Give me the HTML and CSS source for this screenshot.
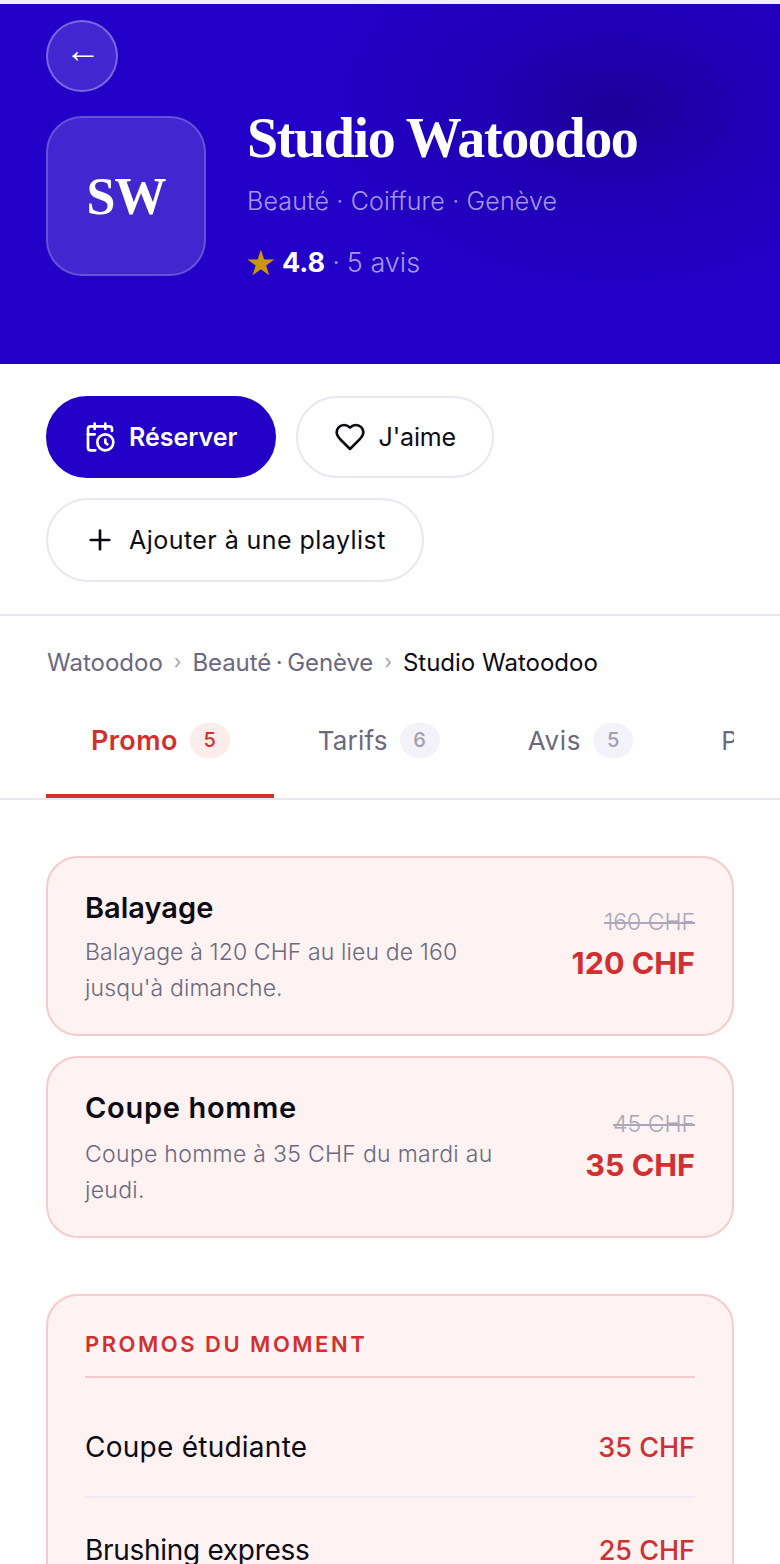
FILE: index.html
```html
<!DOCTYPE html>
<html lang="fr">
<head>
<meta charset="utf-8">
<title>Studio Watoodoo</title>
<link rel="stylesheet" href="styles.css">
</head>
<body>
<div class="page">
  <header class="hero">
    <button class="back" aria-label="Retour">←</button>
    <div class="identity">
      <div class="logo">SW</div>
      <div class="info">
        <h1 class="title">Studio Watoodoo</h1>
        <p class="meta">Beauté · Coiffure · Genève</p>
        <p class="rating"><span class="star">★</span><strong class="score">4.8</strong><span class="dot">·</span><span>5 avis</span></p>
      </div>
    </div>
  </header>

  <section class="actions">
    <a class="btn primary">
      <svg class="ico" viewBox="0 0 24 24"><path d="M21 7.5V6a2 2 0 0 0-2-2H5a2 2 0 0 0-2 2v14a2 2 0 0 0 2 2h3.5"/><path d="M16 2v4"/><path d="M8 2v4"/><path d="M3 10h5"/><path d="M17.5 17.5 16 16.3V14"/><circle cx="16" cy="16" r="6"/></svg>
      Réserver
    </a>
    <a class="btn like">
      <svg class="ico" viewBox="0 0 24 24"><path d="M19 14c1.49-1.46 3-3.21 3-5.5A5.5 5.5 0 0 0 16.5 3c-1.76 0-3 .5-4.500 2-1.500-1.500-2.740-2-4.500-2A5.500 5.500 0 0 0 2 8.500c0 2.300 1.500 4.050 3 5.500l7 7Z"/></svg>
      J'aime
    </a>
    <a class="btn tall">
      <svg class="ico" viewBox="0 0 24 24"><path d="M5 12h14"/><path d="M12 5v14"/></svg>
      Ajouter à une playlist
    </a>
  </section>

  <nav class="crumbs">
    <span>Watoodoo</span><span class="sep">›</span><span class="tight">Beauté · Genève</span><span class="sep">›</span><span class="current">Studio Watoodoo</span>
  </nav>

  <div class="tabbar">
    <div class="tabs">
      <a class="tab active">Promo <span class="badge">5</span></a>
      <a class="tab">Tarifs <span class="badge">6</span></a>
      <a class="tab wide">Avis <span class="badge">5</span></a>
      <a class="tab">Photos</a>
    </div>
  </div>

  <main class="content">
    <article class="promo">
      <div class="promo-text">
        <h2 class="promo-name">Balayage</h2>
        <p class="promo-desc">Balayage à 120 CHF au lieu de 160 jusqu'à dimanche.</p>
      </div>
      <div class="promo-prices">
        <s class="old">160 CHF</s>
        <strong class="new">120 CHF</strong>
      </div>
    </article>
    <article class="promo second">
      <div class="promo-text">
        <h2 class="promo-name">Coupe homme</h2>
        <p class="promo-desc">Coupe homme à 35 CHF du mardi au jeudi.</p>
      </div>
      <div class="promo-prices">
        <s class="old">45 CHF</s>
        <strong class="new">35 CHF</strong>
      </div>
    </article>

    <section class="panel">
      <h3 class="panel-title">PROMOS DU MOMENT</h3>
      <div class="row first"><span>Coupe étudiante</span><span class="row-price">35 CHF</span></div>
      <div class="row"><span>Brushing express</span><span class="row-price">25 CHF</span></div>
    </section>
  </main>
</div>
</body>
</html>
```

FILE: styles.css
```css
* { box-sizing: border-box; }
html, body { margin: 0; padding: 0; background: #fff; }
body { font-family: Inter, "Liberation Sans", sans-serif; color: #0d0b14; overflow: hidden; }
.page { width: 780px; height: 1564px; overflow: hidden; border-top: 4px solid #efeef8; }
h1, h2, h3, p { margin: 0; }

.hero {
  height: 360px;
  padding: 16px 46px 0;
  background:
    radial-gradient(ellipse 320px 200px at 615px 105px, #1b0098 0%, rgba(30,0,175,.7) 45%, rgba(34,0,200,0) 100%),
    #2200c8;
}
.back {
  display: flex; align-items: center; justify-content: center;
  width: 72px; height: 72px; padding: 0 0 12px 2px;
  border-radius: 50%;
  border: 2px solid rgba(255,255,255,.3);
  background: rgba(255,255,255,.15);
  color: #fff; font: 36px/40px "Liberation Sans", sans-serif;
}
.identity { display: flex; gap: 41px; margin-top: 24px; }
.logo {
  display: flex; align-items: center; justify-content: center;
  width: 160px; height: 160px; flex: none;
  border-radius: 36px;
  border: 2px solid rgba(255,255,255,.2);
  background: rgba(255,255,255,.15);
  color: #fff; font: bold 52px "Liberation Serif", serif; letter-spacing: -1px;
}
.title { color: #fff; font: bold 56px/44px "Liberation Serif", serif; letter-spacing: -1.4px; }
.meta { margin-top: 25px; color: rgba(255,255,255,.6); font-size: 25px; font-weight: 300; letter-spacing: .15px; line-height: 32px; }
.rating { display: flex; align-items: center; margin-top: 28px; color: rgba(255,255,255,.6); font-size: 27px; font-weight: 300; line-height: 36px; }
.star { color: #c9960c; font-size: 35px; line-height: 36px; margin: 0 6px 0 -2px; font-family: "DejaVu Sans", sans-serif; }
.score { color: #fff; font-weight: 700; }
.dot { margin: 0 7px; }

.actions {
  display: flex; flex-wrap: wrap; gap: 20px;
  padding: 32px 46px;
  height: 252px; align-content: flex-start;
  border-bottom: 2px solid #e9e8ef;
}
.btn {
  display: inline-flex; align-items: center; gap: 13px;
  height: 82px; padding: 0 36px;
  border-radius: 41px;
  border: 2px solid #e9e8f2;
  background: #fff; color: #0d0b14;
  font-size: 25px; font-weight: 400;
}
.btn.like { letter-spacing: -.15px; }
.btn.tall { height: 84px; border-radius: 42px; letter-spacing: .45px; }
.btn.primary { background: #2200c8; border-color: #2200c8; color: #fff; font-weight: 600; }
.ico { width: 32px; height: 32px; fill: none; stroke: currentColor; stroke-width: 2; stroke-linecap: round; stroke-linejoin: round; flex: none; }

.crumbs { display: flex; align-items: center; gap: 11px; padding: 22px 47px 0; height: 70px; font-size: 24px; font-weight: 400; color: #6b6880; }
.tight { word-spacing: -2px; letter-spacing: -.1px; }
.sep { color: #a5a3b5; font-size: 20px; }
.current { color: #0d0b14; }

.tabbar { height: 114px; border-bottom: 2px solid #e9e8ef; padding: 0 46px; }
.tabs { display: flex; height: 112px; overflow: hidden; }
.tab {
  display: flex; align-items: center; gap: 12px; flex: none;
  height: 112px; padding: 0 44px;
  font-size: 26px; letter-spacing: .2px; color: #6b6880; font-weight: 400;
  border-bottom: 4px solid transparent;
}
.tab.wide { letter-spacing: .7px; }
.tab.active { padding-left: 45px; color: #d03030; font-size: 27px; letter-spacing: .4px; font-weight: 600; border-bottom-color: #d03030; }
.badge {
  display: flex; align-items: center; justify-content: center;
  width: 40px; height: 35px; border-radius: 18px;
  background: #f3f2f9; color: #a09eb2; font-size: 20px; font-weight: 500; letter-spacing: 0;
}
.active .badge { background: #fdecec; color: #d03030; }

.content { padding: 56px 46px 0; }
.promo {
  display: flex; justify-content: space-between; align-items: flex-start; gap: 40px;
  height: 180px; padding: 31px 37px 0;
  border: 2px solid #f6cbcb; border-radius: 32px; background: #fef2f2;
}
.promo.second { margin-top: 20px; height: 182px; }
.promo-text { width: 430px; }
.promo-name { font-size: 29px; line-height: 38px; font-weight: 600; }
.second .promo-name { letter-spacing: .7px; }
.promo-desc { margin-top: 7px; font-size: 23px; font-weight: 350; letter-spacing: .12px; line-height: 36px; color: #6b6880; }
.second .promo-desc { margin-top: 9px; letter-spacing: .3px; }
.promo-prices { display: flex; flex-direction: column; align-items: flex-end; gap: 4px; padding-top: 17px; }
.second .promo-prices { padding-top: 19px; }
.old { color: #a9a7b8; font-size: 23px; font-weight: 350; line-height: 32px; }
.new { color: #d03030; font-size: 30.5px; line-height: 42px; font-weight: 700; }

.panel {
  margin-top: 56px; height: 400px; padding: 32px 37px 0;
  border: 2px solid #f6cbcb; border-radius: 32px; background: #fef2f2;
}
.panel-title { height: 50px; font-size: 22px; line-height: 32px; letter-spacing: 2.5px; font-weight: 600; color: #d03030; border-bottom: 2px solid #f6cbcb; }
.row { display: flex; justify-content: space-between; align-items: baseline; height: 120px; padding-top: 51px; font-size: 28px; letter-spacing: .25px; line-height: 36px; border-bottom: 2px solid #efe9f5; }
.row + .row { height: 106px; padding-top: 34px; border-bottom: 0; letter-spacing: -.3px; }
.row-price { color: #d03030; font-weight: 500; font-size: 27px; letter-spacing: 0; }
```
